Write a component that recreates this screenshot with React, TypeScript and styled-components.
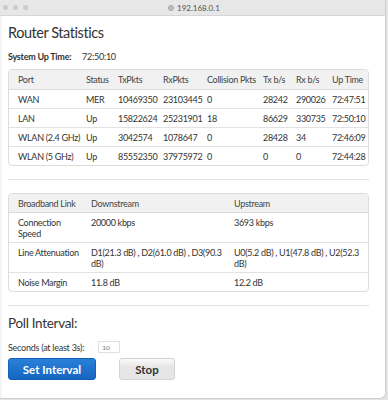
import styled, { createGlobalStyle } from "styled-components";

const GlobalStyle = createGlobalStyle`
  html, body {
    margin: 0;
    padding: 0;
    background: #e4e4e4;
  }
  body {
    font-family: Lato, "Open Sans", sans-serif;
    color: #333;
  }
`;

const Window = styled.div`
  width: 385px;
  height: 398px;
  background: #fff;
  border-right: 1px solid #cfcfcf;
  border-bottom: 1px solid #cfcfcf;
  border-radius: 0 0 6px 0;
  box-shadow: inset 3px 0 3px -2px rgba(0, 0, 0, 0.08);
  display: flex;
  flex-direction: column;
  overflow: hidden;
`;

const TitleBar = styled.div`
  height: 15px;
  flex-shrink: 0;
  background: #e7e7e7;
  border-bottom: 1px solid #d6d6d6;
  display: flex;
  align-items: center;
  padding-left: 3px;
  position: relative;
`;

const Dot = styled.span`
  width: 5px;
  height: 5px;
  border-radius: 50%;
  background: #cbcbcb;
  margin-right: 5px;
`;

const Address = styled.div`
  position: absolute;
  left: 168px;
  top: 0;
  height: 15px;
  display: flex;
  align-items: center;
  gap: 3px;
  font-size: 8px;
  color: #555;
`;

const Content = styled.div`
  padding: 8px 16px 0 8px;
`;

const Heading = styled.h1`
  margin: 0;
  font-size: 14.5px;
  font-weight: 400;
  letter-spacing: -0.45px;
  line-height: 18px;
  color: #333;
`;

const UpTime = styled.div`
  display: flex;
  margin-top: 9px;
  font-size: 9px;
  letter-spacing: -0.25px;
  line-height: 12px;
`;

const UpLabel = styled.span`
  font-weight: 700;
  width: 74px;
`;

const TableBox = styled.div<{ $top: number }>`
  border: 1px solid #dcdcdc;
  border-radius: 4px;
  overflow: hidden;
  margin-top: ${(p) => p.$top}px;
`;

const Table = styled.table`
  width: 100%;
  border-collapse: collapse;
  table-layout: fixed;
  font-size: 9px;
  letter-spacing: -0.3px;
  line-height: 11px;
`;

const Th = styled.th`
  background: #f1f1f1;
  font-weight: 400;
  text-align: left;
  color: #444;
  padding: 4px 4px 3.5px;
  white-space: nowrap;
  border-bottom: 1px solid #dcdcdc;
  &:first-child {
    padding-left: 9px;
  }
`;

const Td = styled.td`
  text-align: left;
  padding: 4px 4px 3px;
  white-space: nowrap;
  vertical-align: top;
  border-top: 1px solid #e2e2e2;
  &:first-child {
    padding-left: 9px;
  }
`;

const Row = styled.tr`
  &:nth-child(1) td {
    border-top: 0;
  }
`;

const Rule = styled.hr<{ $top: number; $bottom: number }>`
  border: 0;
  border-top: 1px solid #e2e2e2;
  margin: ${(p) => `${p.$top}px 0 ${p.$bottom}px`};
`;

const PollTitle = styled.h2`
  margin: 0;
  font-size: 13.5px;
  font-weight: 400;
  letter-spacing: -0.3px;
  line-height: 17px;
`;

const Seconds = styled.div`
  display: flex;
  align-items: center;
  margin-top: 9px;
  font-size: 9px;
  letter-spacing: -0.25px;
`;

const SecInput = styled.input`
  width: 14px;
  height: 8px;
  margin-left: 14px;
  border: 1px solid #e0e0e0;
  padding: 1px 3px;
  font-size: 6.5px;
  color: #777;
  font-family: inherit;
`;

const Buttons = styled.div`
  display: flex;
  gap: 23px;
  margin-top: 5px;
`;

const Button = styled.button<{ $primary?: boolean }>`
  height: 22px;
  width: ${(p) => (p.$primary ? 88 : 56)}px;
  border-radius: 3px;
  font-family: inherit;
  font-size: 11.5px;
  font-weight: 700;
  padding: 0;
  cursor: pointer;
  color: ${(p) => (p.$primary ? "#fff" : "#333")};
  border: 1px solid ${(p) => (p.$primary ? "#1462b8" : "#d2d2d2")};
  background: ${(p) =>
    p.$primary
      ? "linear-gradient(#2a80d8, #1566c2)"
      : "linear-gradient(#fbfbfb, #e6e6e6 40%)"};
`;

const ports = [
  ["WAN", "MER", "10469350", "23103445", "0", "28242", "290026", "72:47:51"],
  ["LAN", "Up", "15822624", "25231901", "18", "86629", "330735", "72:50:10"],
  ["WLAN (2.4 GHz)", "Up", "3042574", "1078647", "0", "28428", "34", "72:46:09"],
  ["WLAN (5 GHz)", "Up", "85552350", "37975972", "0", "0", "0", "72:44:28"],
];

const portCols = [73, 32, 45, 44, 56, 33, 36, 43];
const portHead = ["Port", "Status", "TxPkts", "RxPkts", "Collision Pkts", "Tx b/s", "Rx b/s", "Up Time"];

export default function App() {
  return (
    <>
      <GlobalStyle />
      <Window>
        <TitleBar>
          <Dot />
          <Dot />
          <Dot />
          <Address>
            <svg width="6" height="6" viewBox="0 0 12 12">
              <circle cx="6" cy="6" r="5.2" fill="none" stroke="#888" strokeWidth="1.2" />
              <ellipse cx="6" cy="6" rx="2.2" ry="5.2" fill="none" stroke="#888" strokeWidth="1" />
              <path d="M1 6h10" stroke="#888" strokeWidth="1" />
            </svg>
            192.168.0.1
          </Address>
        </TitleBar>
        <Content>
          <Heading>Router Statistics</Heading>
          <UpTime>
            <UpLabel>System Up Time:</UpLabel>
            <span>72:50:10</span>
          </UpTime>
          <TableBox $top={6}>
            <Table>
              <colgroup>
                {portCols.map((w, i) => (
                  <col key={i} style={{ width: w }} />
                ))}
              </colgroup>
              <thead>
                <tr>
                  {portHead.map((h) => (
                    <Th key={h}>{h}</Th>
                  ))}
                </tr>
              </thead>
              <tbody>
                {ports.map((r) => (
                  <Row key={r[0]}>
                    {r.map((c, i) => (
                      <Td key={i}>{c}</Td>
                    ))}
                  </Row>
                ))}
              </tbody>
            </Table>
          </TableBox>
          <Rule $top={13} $bottom={13} />
          <TableBox $top={0}>
            <Table>
              <colgroup>
                <col style={{ width: 78 }} />
                <col style={{ width: 143 }} />
                <col style={{ width: 141 }} />
              </colgroup>
              <thead>
                <tr>
                  <Th>Broadband Link</Th>
                  <Th>Downstream</Th>
                  <Th>Upstream</Th>
                </tr>
              </thead>
              <tbody>
                <Row>
                  <Td>
                    Connection
                    <br />
                    Speed
                  </Td>
                  <Td>20000 kbps</Td>
                  <Td>3693 kbps</Td>
                </Row>
                <Row>
                  <Td>Line Attenuation</Td>
                  <Td>
                    D1(21.3 dB) , D2(61.0 dB) , D3(90.3
                    <br />
                    dB)
                  </Td>
                  <Td>
                    U0(5.2 dB) , U1(47.8 dB) , U2(52.3
                    <br />
                    dB)
                  </Td>
                </Row>
                <Row>
                  <Td>Noise Margin</Td>
                  <Td>11.8 dB</Td>
                  <Td>12.2 dB</Td>
                </Row>
              </tbody>
            </Table>
          </TableBox>
          <Rule $top={13} $bottom={9} />
          <PollTitle>Poll Interval:</PollTitle>
          <Seconds>
            Seconds (at least 3s):
            <SecInput defaultValue="10" />
          </Seconds>
          <Buttons>
            <Button $primary>Set Interval</Button>
            <Button>Stop</Button>
          </Buttons>
        </Content>
      </Window>
    </>
  );
}
